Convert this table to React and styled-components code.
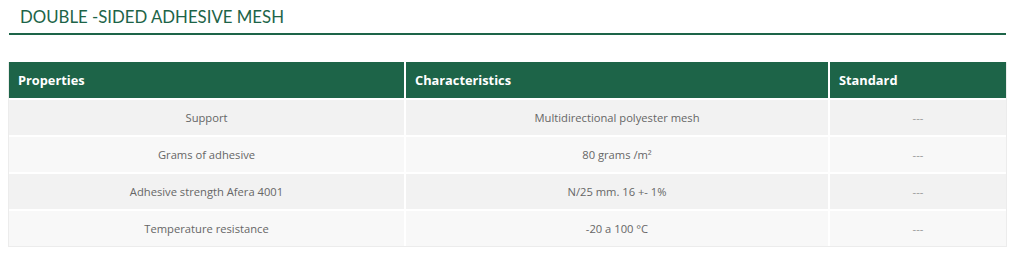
import React from 'react';
import styled, { createGlobalStyle } from 'styled-components';

const rows = [
  ['Support', 'Multidirectional polyester mesh', '---'],
  ['Grams of adhesive', '80 grams /m²', '---'],
  ['Adhesive strength Afera 4001', 'N/25 mm. 16 +- 1%', '---'],
  ['Temperature resistance', '-20 a 100 °C', '---'],
];

const App = () => {
  return (
    <Page>
      <GlobalStyle />
      <Heading>
        <Title>Double -sided adhesive mesh</Title>
      </Heading>
      <TableFrame>
        <Table>
          <colgroup>
            <col style={{ width: 396 }} />
            <col style={{ width: 424 }} />
            <col />
          </colgroup>
          <thead>
            <tr>
              <Th>Properties</Th>
              <Th>Characteristics</Th>
              <Th>Standard</Th>
            </tr>
          </thead>
          <tbody>
            {rows.map((row, i) => (
              <Row key={i} $odd={i % 2 === 0}>
                {row.map((cell, j) => (
                  <Td key={j} $muted={cell === '---'}>{cell}</Td>
                ))}
              </Row>
            ))}
          </tbody>
        </Table>
      </TableFrame>
    </Page>
  );
};

const GlobalStyle = createGlobalStyle`
  body {
    margin: 0;
    background: #ffffff;
    font-family: "Open Sans", "Noto Sans", sans-serif;
  }
`;

const Page = styled.div`
  padding: 0 18px 0 9px;
`;

const Heading = styled.div`
  border-bottom: 2px solid #1d6448;
  padding: 7px 0 6px 11px;
`;

const Title = styled.h2`
  margin: 0;
  font-family: Lato, "Open Sans", sans-serif;
  font-weight: 400;
  font-size: 16.8px;
  line-height: 20px;
  letter-spacing: 0;
  text-transform: uppercase;
  color: #1d6448;
`;

const TableFrame = styled.div`
  width: 997px;
  margin: 27px 0 0 -1px;
  border: 1px solid #ececec;
  border-top: none;
`;

const Table = styled.table`
  width: 100%;
  border-collapse: collapse;
  table-layout: fixed;
`;

const Th = styled.th`
  background: #1d6448;
  color: #ffffff;
  font-size: 12.8px;
  font-weight: 700;
  text-align: left;
  height: 36px;
  padding: 0 9px;
  border: 2px solid #ffffff;
  border-top: none;
  &:first-child { border-left: none; }
  &:last-child { border-right: none; }
`;

const Row = styled.tr`
  background: ${(p) => (p.$odd ? '#f2f2f2' : '#f8f8f8')};
`;

const Td = styled.td`
  height: 34px;
  padding: 0 9px 1px;
  text-align: center;
  font-size: 11.2px;
  color: ${(p) => (p.$muted ? '#999999' : '#666666')};
  border: 2px solid #ffffff;
  &:first-child { border-left: none; }
  &:last-child { border-right: none; }
  tr:last-child > & { border-bottom: none; }
`;

export default App;
